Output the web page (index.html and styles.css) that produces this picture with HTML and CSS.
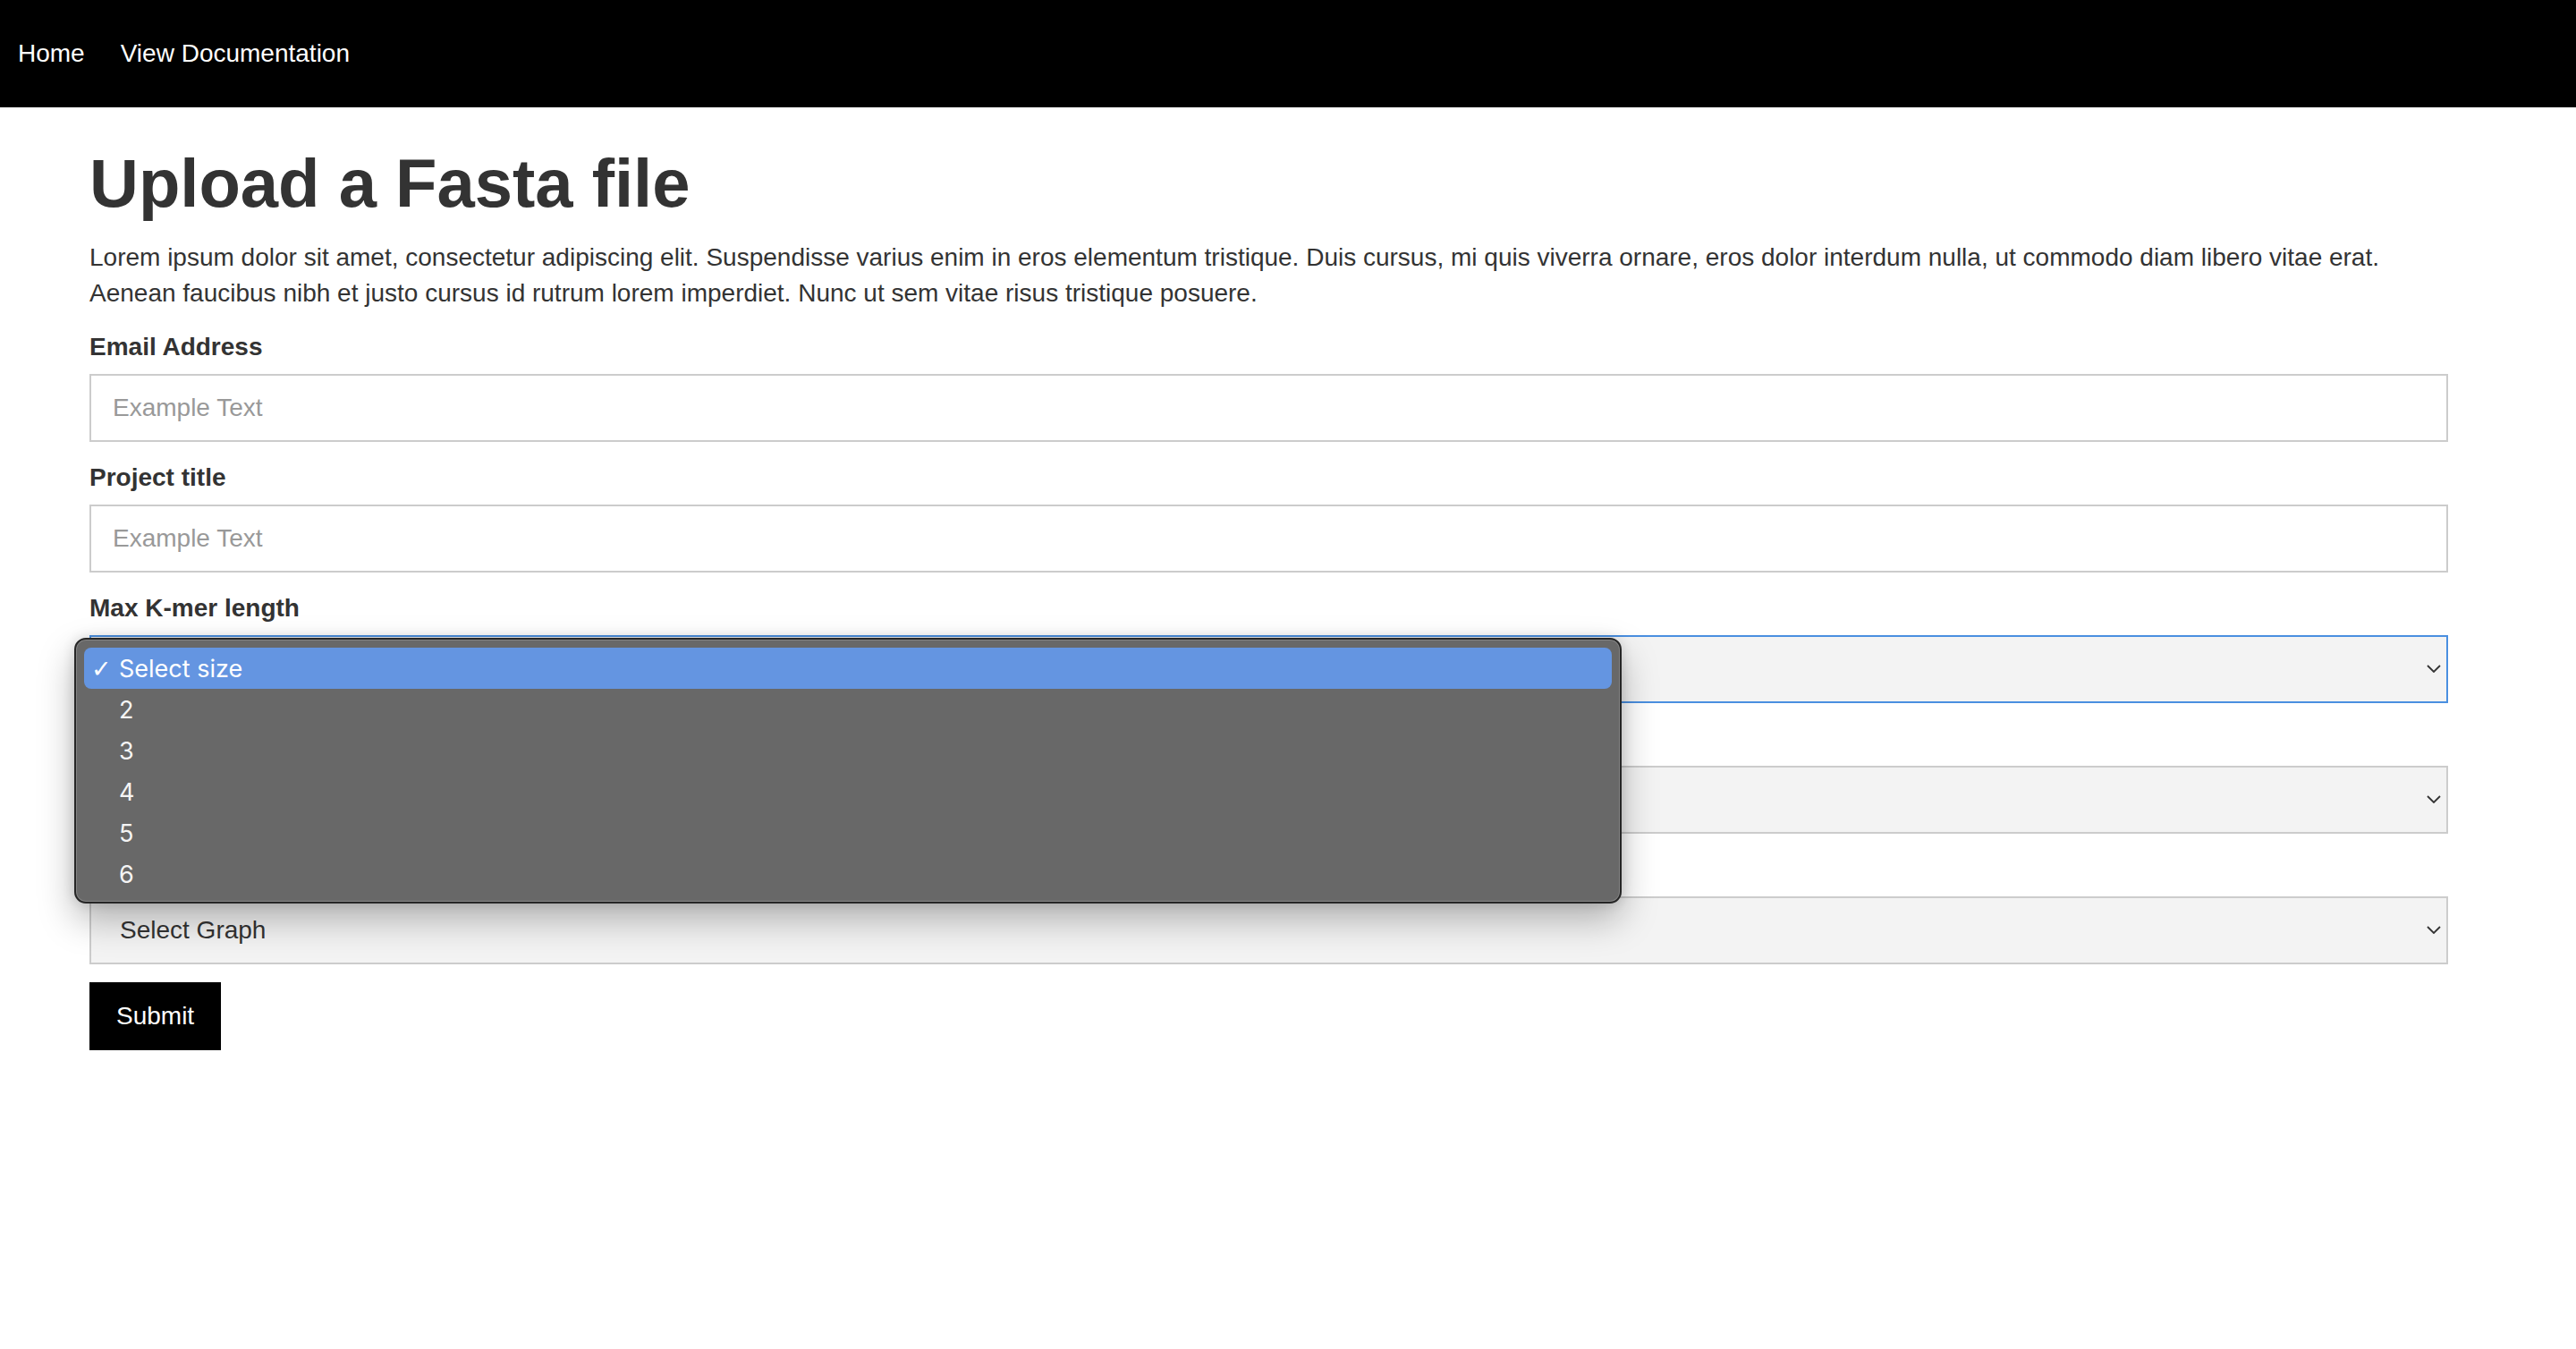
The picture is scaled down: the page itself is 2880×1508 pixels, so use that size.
FILE: index.html
```html
<!DOCTYPE html>
<html lang="en">
<head>
<meta charset="utf-8">
<title>Upload a Fasta file</title>
<link rel="stylesheet" href="styles.css">
</head>
<body>
<nav class="navbar">
  <a class="nav-link" href="#">Home</a>
  <a class="nav-link" href="#">View Documentation</a>
</nav>
<main class="content">
  <h1 class="heading">Upload a Fasta file</h1>
  <p class="intro">Lorem ipsum dolor sit amet, consectetur adipiscing elit. Suspendisse varius enim in eros elementum tristique. Duis cursus, mi quis viverra ornare, eros dolor interdum nulla, ut commodo diam libero vitae erat. Aenean faucibus nibh et justo cursus id rutrum lorem imperdiet. Nunc ut sem vitae risus tristique posuere.</p>
  <form class="upload-form">
    <label class="field-label" for="email">Email Address</label>
    <input class="text-field" id="email" type="email" placeholder="Example Text">
    <label class="field-label" for="title">Project title</label>
    <input class="text-field" id="title" type="text" placeholder="Example Text">
    <label class="field-label" for="kmax">Max K-mer length</label>
    <div class="select-wrap">
      <select class="select-field is-focused" id="kmax">
        <option>Select size</option>
        <option>2</option>
        <option>3</option>
        <option>4</option>
        <option>5</option>
        <option>6</option>
      </select>
      <svg class="chevron" viewBox="0 0 16 9" width="16" height="9"><polyline points="1,1 8,8 15,1"/></svg>
      <div class="select-menu">
        <div class="menu-item is-selected"><span class="check">✓</span>Select size</div>
        <div class="menu-item"><span class="check"></span>2</div>
        <div class="menu-item"><span class="check"></span>3</div>
        <div class="menu-item"><span class="check"></span>4</div>
        <div class="menu-item"><span class="check"></span>5</div>
        <div class="menu-item"><span class="check"></span>6</div>
      </div>
    </div>
    <label class="field-label is-covered" for="kmin">Min K-mer length</label>
    <div class="select-wrap">
      <select class="select-field is-covered-text" id="kmin">
        <option>Select size</option>
        <option>2</option>
        <option>3</option>
      </select>
      <svg class="chevron" viewBox="0 0 16 9" width="16" height="9"><polyline points="1,1 8,8 15,1"/></svg>
    </div>
    <label class="field-label is-covered" for="graph">Graph type</label>
    <div class="select-wrap">
      <select class="select-field" id="graph">
        <option>Select Graph</option>
        <option>Bar</option>
        <option>Line</option>
      </select>
      <svg class="chevron" viewBox="0 0 16 9" width="16" height="9"><polyline points="1,1 8,8 15,1"/></svg>
    </div>
    <button class="submit-button" type="button">Submit</button>
  </form>
</main>
</body>
</html>
```
FILE: styles.css
```css
* {
  box-sizing: border-box;
}

body {
  margin: 0;
  font-family: "Liberation Sans", Arial, sans-serif;
  font-size: 28px;
  line-height: 40px;
  color: #333;
  background: #fff;
}

.navbar {
  display: flex;
  height: 120px;
  background: #000;
}

.nav-link {
  padding: 0 20px;
  line-height: 120px;
  color: #fff;
  text-decoration: none;
}

.content {
  box-sizing: content-box;
  width: 2637px;
  padding-left: 100px;
}

.heading {
  margin: 41px 0 19px;
  font-size: 76px;
  line-height: 88px;
  font-weight: 700;
  color: #333;
}

.intro {
  margin: 0 0 20px;
}

.upload-form {
  display: flex;
  flex-direction: column;
  align-items: stretch;
}

.field-label {
  display: block;
  margin-bottom: 10px;
  font-weight: 700;
}

.field-label.is-covered {
  visibility: hidden;
}

.text-field,
.select-field {
  display: block;
  width: 100%;
  height: 76px;
  margin: 0 0 20px;
  padding: 16px 24px;
  font-family: inherit;
  font-size: 28px;
  line-height: 40px;
  color: #333;
  border: 2px solid #ccc;
  border-radius: 0;
  outline: none;
}

.text-field {
  background: #fff;
}

.text-field::placeholder {
  color: #999;
}

.select-wrap {
  position: relative;
}

.select-field {
  appearance: none;
  -webkit-appearance: none;
  padding-left: 32px;
  background: #f3f3f3;
}

.select-field.is-covered-text {
  color: transparent;
}

.select-field.is-focused {
  border-color: #4a8fe0;
}

.chevron {
  position: absolute;
  right: 8px;
  top: 33px;
  fill: none;
  stroke: #333;
  stroke-width: 1.8;
}

.select-menu {
  position: absolute;
  left: -17px;
  top: 3px;
  z-index: 5;
  width: 1730px;
  height: 297px;
  padding: 9px 9px;
  background: #686868;
  border: 2px solid #262626;
  border-radius: 13px;
  box-shadow: inset 0 0 0 1px rgba(255, 255, 255, 0.18), 0 18px 40px rgba(0, 0, 0, 0.28), 0 0 14px rgba(0, 0, 0, 0.14);
  font-family: Inter, "Noto Sans", sans-serif;
}

.menu-item {
  display: flex;
  align-items: center;
  height: 46px;
  padding-left: 8px;
  padding-top: 2px;
  border-radius: 8px;
  font-size: 27px;
  color: #f4f4f4;
}

.menu-item.is-selected {
  background: #6495e1;
  color: #fff;
}

.check {
  width: 31px;
  font-family: "DejaVu Sans", sans-serif;
  font-size: 27px;
}

.submit-button {
  align-self: flex-start;
  padding: 18px 30px;
  font-family: inherit;
  font-size: 28px;
  line-height: 40px;
  color: #fff;
  background: #000;
  border: 0;
  border-radius: 0;
}
```
